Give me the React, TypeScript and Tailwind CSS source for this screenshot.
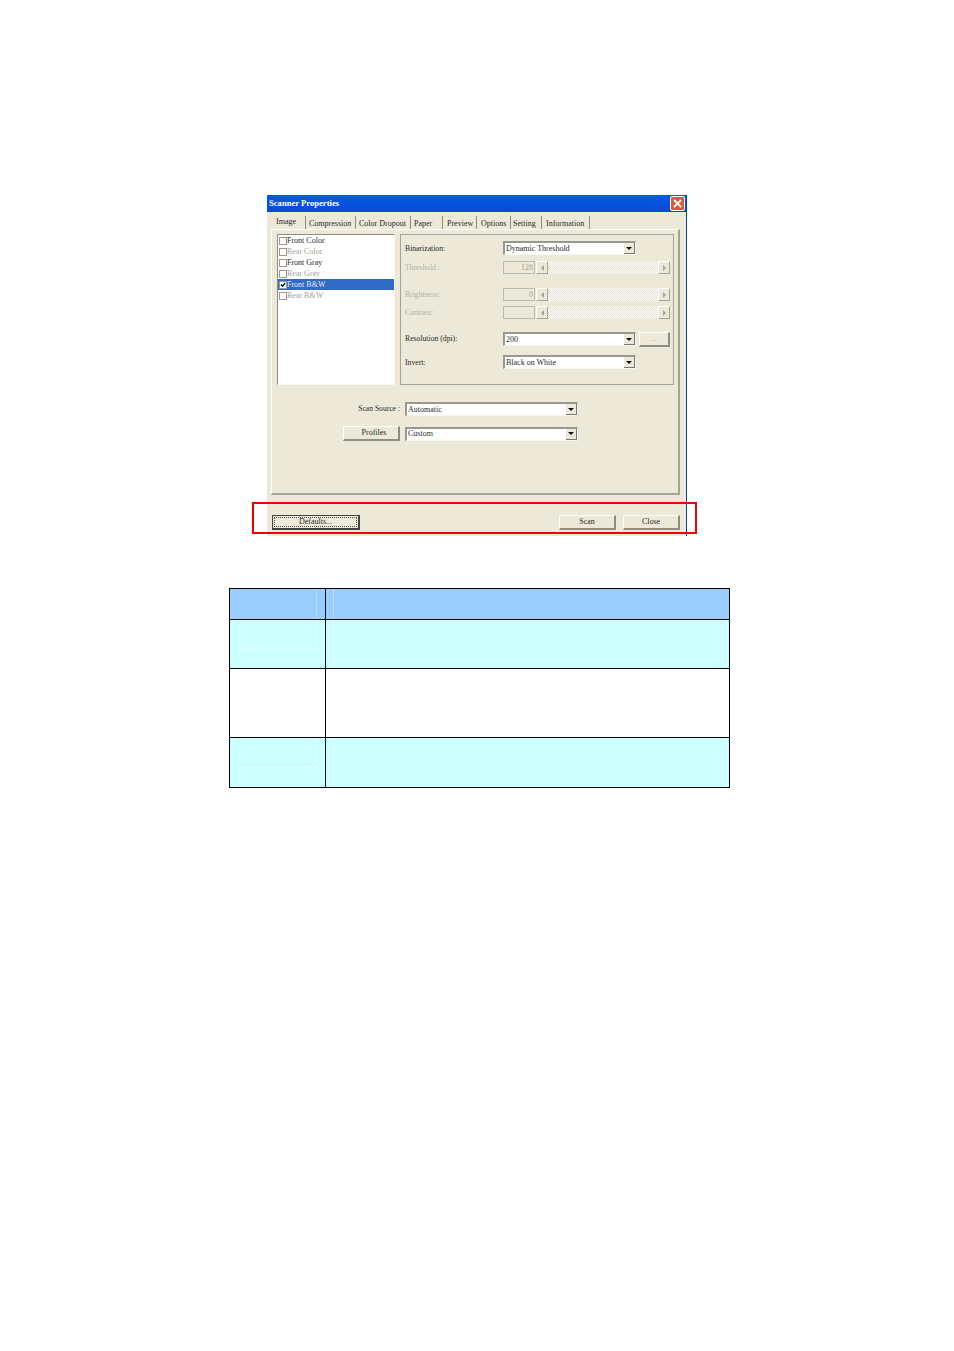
import React from 'react';

const tabs = [
  { label: 'Compression', w: 'w-[50px]', pl: 'pl-[3px]' },
  { label: 'Color Dropout', w: 'w-[55px]', pl: 'pl-[3px]' },
  { label: 'Paper', w: 'w-[32px]', pl: 'pl-[3px]' },
  { label: 'Preview', w: 'w-[34px]', pl: 'pl-[4px]' },
  { label: 'Options', w: 'w-[34px]', pl: 'pl-[4px]' },
  { label: 'Setting', w: 'w-[31px]', pl: 'pl-[2px]' },
  { label: 'Information', w: 'w-[48px]', pl: 'pl-[4px]' },
];

const listItems = [
  { label: 'Front Color', dim: false },
  { label: 'Rear Color', dim: true },
  { label: 'Front Gray', dim: false },
  { label: 'Rear Gray', dim: true },
  { label: 'Front B&W', dim: false, selected: true },
  { label: 'Rear B&W', dim: true },
];

const Arrow = ({ dir, dim }: { dir: 'down' | 'left' | 'right'; dim?: boolean }) => {
  const pts = dir === 'down' ? '0,0 6,0 3,3' : dir === 'left' ? '3,0 3,6 0,3' : '0,0 0,6 3,3';
  const size = dir === 'down' ? 'w-[6px] h-[3px]' : 'w-[3px] h-[6px]';
  return (
    <svg viewBox={dir === 'down' ? '0 0 6 3' : '0 0 3 6'} className={size}>
      <polygon points={pts} fill={dim ? '#a5a396' : '#111111'} />
    </svg>
  );
};

const Combo = ({ value, className }: { value: string; className: string }) => (
  <div className={`flex h-[14px] items-center bg-white border-t-2 border-l-2 border-t-[#9a988c] border-l-[#9a988c] border-b border-r border-b-[#f7f6f0] border-r-[#f7f6f0] ${className}`}>
    <span className="flex-1 pl-[1px] text-[8px] leading-none text-[#2a2a2a]">{value}</span>
    <div className="flex h-[11px] w-[11px] items-center justify-center bg-[#ece9d8] border-r border-b border-r-[#777] border-b-[#777]">
      <Arrow dir="down" />
    </div>
  </div>
);

const ScrollButton = ({ dir }: { dir: 'left' | 'right' }) => (
  <div className="flex h-full w-[12px] items-center justify-center bg-[#ece9d8] border-r border-b border-r-[#a5a396] border-b-[#a5a396] border-t border-l border-t-white border-l-white">
    <Arrow dir={dir} dim />
  </div>
);

const SliderRow = ({ label, value, className }: { label: string; value: string; className: string }) => (
  <div className={`flex h-[13px] items-center ${className}`}>
    <span className="w-[98px] text-[7.7px] leading-none text-[#b3b1a5]">{label}</span>
    <div className="flex h-full w-[32px] items-center justify-end pr-[1px] border border-[#bdbbae] text-[8px] leading-none text-[#a5a396]">{value}</div>
    <div className="ml-[1px] flex h-full w-[134px] justify-between bg-[repeating-conic-gradient(#ffffff_0_25%,#e4e1d2_0_50%)] bg-[length:2px_2px]">
      <ScrollButton dir="left" />
      <ScrollButton dir="right" />
    </div>
  </div>
);

const Button = ({ label, className, dim }: { label: string; className: string; dim?: boolean }) => (
  <div className={`flex h-[15px] items-center justify-center bg-[#ece9d8] border-t border-l border-t-white border-l-white border-b-2 border-r-2 border-b-[#8f8d80] border-r-[#8f8d80] text-[8px] leading-none ${dim ? 'text-[#a5a396]' : 'text-[#2a2a2a]'} ${className}`}>
    {label}
  </div>
);

export default function App() {
  return (
    <div className="relative h-[1351px] w-[954px] overflow-hidden bg-white pt-[195px] font-['Liberation_Serif',serif]">
      {/* Scanner dialog */}
      <div className="ml-[267px] h-[341px] w-[420px] bg-[#ece9d8] border-r border-r-[#0a3fd0]">
        <div className="flex h-[17px] items-center justify-between bg-gradient-to-b from-[#0a5ae6] via-[#0553e0] to-[#0a48d2] pl-[2px] pr-[1px]">
          <span className="text-[8.6px] font-bold leading-none text-white">Scanner Properties</span>
          <div className="flex h-[15px] w-[15px] items-center justify-center rounded-[2px] border border-white bg-[#dc5a36]">
            <svg viewBox="0 0 9 9" className="h-[9px] w-[9px]">
              <path d="M1 1 L8 8 M8 1 L1 8" stroke="#ffffff" strokeWidth="1.8" />
            </svg>
          </div>
        </div>

        {/* Tabs */}
        <div className="ml-[4px] mt-[4px] flex h-[13px] items-stretch">
          <div className="flex w-[35px] items-start pl-[5px] pt-[2px] bg-[#ece9d8] border-r border-r-[#8f8d80]">
            <span className="text-[8px] leading-none text-[#2a2a2a]">Image</span>
          </div>
          {tabs.map((t) => (
            <div key={t.label} className={`flex ${t.w} ${t.pl} items-center border-r border-r-[#8f8d80] pt-[2px]`}>
              <span className="whitespace-nowrap text-[8px] leading-none text-[#2a2a2a]">{t.label}</span>
            </div>
          ))}
        </div>

        {/* Tab panel */}
        <div className="ml-[4px] h-[266px] w-[409px] border-t border-l border-t-white border-l-white border-r-2 border-b-2 border-r-[#a5a396] border-b-[#a5a396] pl-[5px] pt-[4px]">
          <div className="flex gap-[5px]">
            <div className="h-[151px] w-[118px] bg-white border-t border-l border-t-[#8f8d80] border-l-[#8f8d80] border-b border-r border-b-[#f7f6f0] border-r-[#f7f6f0]">
              {listItems.map((item) => (
                <div key={item.label} className={`flex h-[11px] items-center pl-[1px] ${item.selected ? 'bg-[#316ac5]' : ''}`}>
                  <div className="flex h-[8px] w-[8px] items-center justify-center border border-[#9a988c] bg-white">
                    {item.selected && (
                      <svg viewBox="0 0 7 7" className="h-[7px] w-[7px]">
                        <path d="M1 3.5 L3 5.5 L6 1.5" fill="none" stroke="#000000" strokeWidth="1.5" />
                      </svg>
                    )}
                  </div>
                  <span className={`text-[8px] leading-none ${item.selected ? 'text-[#e4e9f5]' : item.dim ? 'text-[#a5a396]' : 'text-[#2a2a2a]'}`}>{item.label}</span>
                </div>
              ))}
            </div>

            <div className="h-[151px] w-[274px] border border-[#a5a396] pl-[4px] pt-[6px]">
              <div className="flex h-[14px] items-center">
                <span className="w-[98px] pt-[2px] text-[7.7px] leading-none text-[#2a2a2a]">Binarization:</span>
                <Combo value="Dynamic Threshold" className="w-[133px]" />
              </div>
              <SliderRow label="Threshold :" value="128" className="mt-[6px]" />
              <SliderRow label="Brightness:" value="0" className="mt-[14px]" />
              <SliderRow label="Contrast:" value="" className="mt-[5px]" />
              <div className="mt-[13px] flex h-[14px] items-center">
                <span className="w-[98px] text-[7.7px] leading-none text-[#2a2a2a]">Resolution (dpi):</span>
                <Combo value="200" className="w-[133px]" />
                <Button label="..." dim className="ml-[3px] w-[31px]" />
              </div>
              <div className="mt-[9px] flex h-[14px] items-center">
                <span className="w-[98px] pt-[1px] text-[7.7px] leading-none text-[#2a2a2a]">Invert:</span>
                <Combo value="Black on White" className="w-[133px]" />
              </div>
            </div>
          </div>

          <div className="mt-[17px] flex h-[14px] items-center">
            <span className="w-[123px] text-right text-[7.6px] leading-none text-[#2a2a2a]">Scan Source :</span>
            <Combo value="Automatic" className="ml-[5px] w-[173px]" />
          </div>
          <div className="mt-[10px] flex h-[15px] items-center">
            <Button label="Profiles" className="ml-[66px] w-[57px] pl-[6px]" />
            <Combo value="Custom" className="ml-[5px] w-[173px]" />
          </div>
        </div>

        {/* Bottom buttons */}
        <div className="mt-[20px] flex pl-[5px] pr-[6px]">
          <div className="flex h-[15px] w-[88px] items-center justify-center border border-[#444] bg-[#ece9d8] border-b-2 border-r-2">
            <div className="flex h-[10px] w-[83px] items-center justify-center border border-dotted border-[#555] text-[8px] leading-none text-[#2a2a2a]">Defaults...</div>
          </div>
          <Button label="Scan" className="ml-auto w-[57px]" />
          <Button label="Close" className="ml-[7px] w-[57px]" />
        </div>
      </div>

      {/* Red highlight */}
      <div className="absolute left-[252px] top-[502px] h-[32px] w-[445px] border-2 border-[#f00000]" />

      {/* Table */}
      <table className="ml-[229px] mt-[52px] w-[501px] table-fixed border-collapse">
        <tbody>
          <tr className="h-[31px] bg-[#99ccff]">
            <td className="relative w-[96px] border border-black p-0">
              <div className="absolute bottom-0 right-[8px] top-0 w-px bg-[#b8dcff]" />
            </td>
            <td className="relative border border-black p-0">
              <div className="absolute bottom-0 left-[7px] top-0 w-px bg-[#b8dcff]" />
            </td>
          </tr>
          <tr className="h-[49px] bg-[#ccffff]">
            <td className="relative border border-black p-0">
              <div className="absolute right-[8px] top-0 h-[29px] w-px bg-[#e4ffff]" />
              <div className="absolute right-[8px] top-[29px] h-px w-[78px] bg-[#e4ffff]" />
            </td>
            <td className="relative border border-black p-0">
              <div className="absolute bottom-0 left-[7px] top-0 w-px bg-[#e4ffff]" />
            </td>
          </tr>
          <tr className="h-[69px] bg-white">
            <td className="border border-black p-0" />
            <td className="border border-black p-0" />
          </tr>
          <tr className="h-[50px] bg-[#ccffff]">
            <td className="relative border border-black p-0">
              <div className="absolute right-[8px] top-0 h-[29px] w-px bg-[#e4ffff]" />
              <div className="absolute right-[8px] top-[29px] h-px w-[78px] bg-[#e4ffff]" />
            </td>
            <td className="relative border border-black p-0">
              <div className="absolute bottom-0 left-[7px] top-0 w-px bg-[#e4ffff]" />
            </td>
          </tr>
        </tbody>
      </table>
    </div>
  );
}
